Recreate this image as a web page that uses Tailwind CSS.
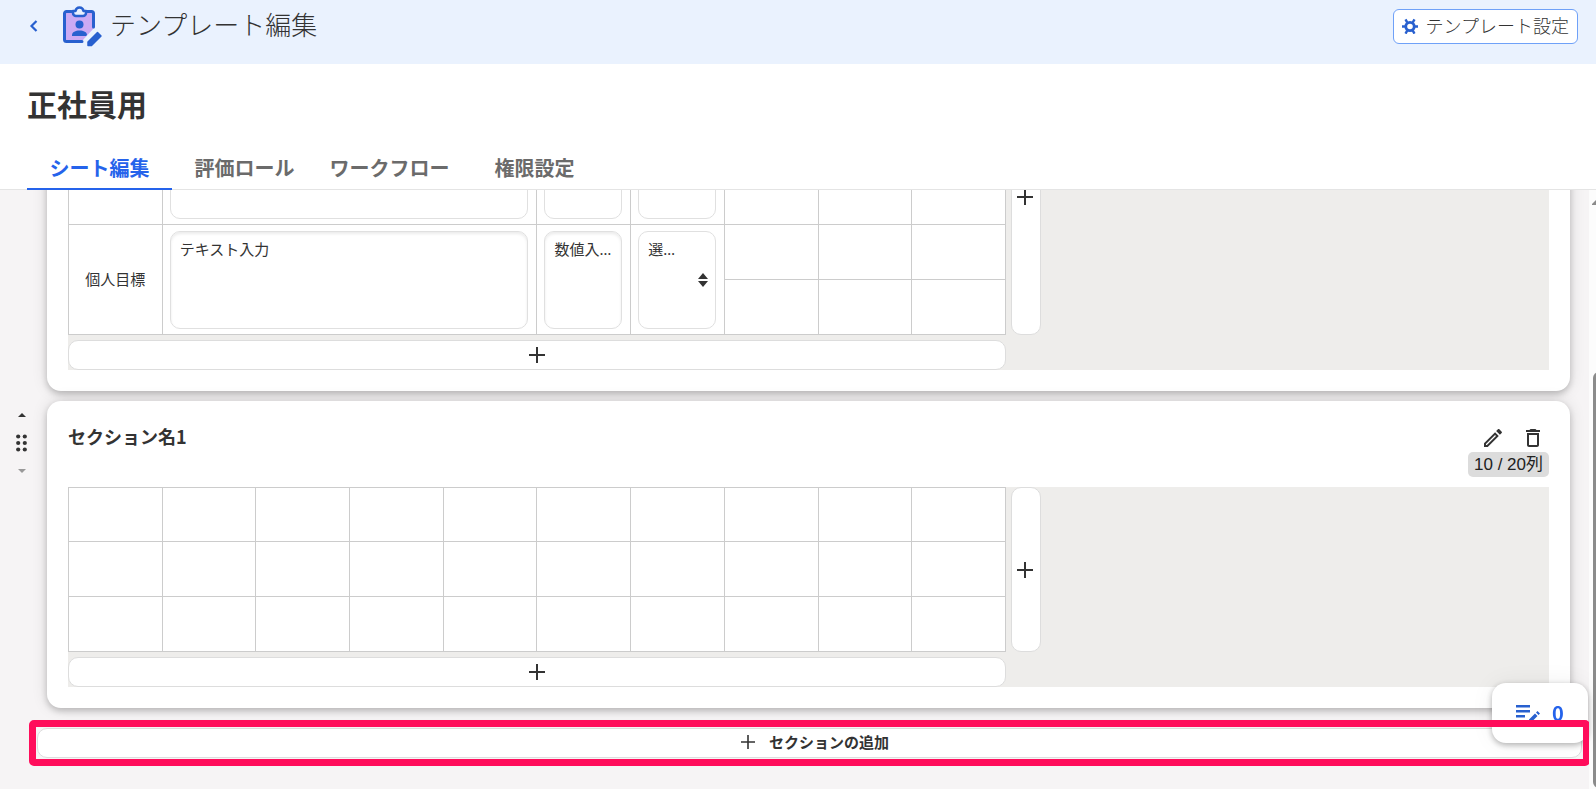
<!DOCTYPE html>
<html lang="ja">
<head>
<meta charset="UTF-8">
<meta name="viewport" content="width=device-width, initial-scale=1.0">
<title>テンプレート編集</title>
<script src="https://cdn.jsdelivr.net/npm/@tailwindcss/browser@4"></script>
</head>
<body class="flex h-screen flex-col overflow-hidden bg-[#f6f4f5] font-['Noto_Sans','Noto_Sans_CJK_JP',sans-serif] text-[#333]">

<header class="shrink-0 border-b border-[#e4e4e4] bg-white">
  <div class="flex h-16 items-start justify-between bg-[#eaf2fe] pr-[18px] pl-7">
    <div class="flex items-center pt-1">
      <a href="#" aria-label="戻る" class="flex h-11 w-[34px] items-center">
        <svg class="size-3" viewBox="0 0 12 12" fill="none" stroke="#2860cf" stroke-width="2.2"><path d="M8.500 1 3.500 6l5 5"/></svg>
      </a>
      <svg class="h-11 w-[42px]" viewBox="0 0 42 44" fill="none" stroke="#2860cf" stroke-width="3" stroke-linecap="round" stroke-linejoin="round">
        <path d="M3 7h29v17L20 37H3z" fill="#cbaaf4" stroke="none"/>
        <path d="M20 37.500H4.500a2 2 0 0 1-2-2V9.500a2 2 0 0 1 2-2h5M24.500 7.500h5a2 2 0 0 1 2 2V23"/>
        <path d="M11 7h2.500c.5-2.500 2-3.500 4-3.500s3.500 1 4 3.500H24v2a3 3 0 0 1-3 3h-7a3 3 0 0 1-3-3z" fill="#eaf2fe" stroke-width="2.500"/>
        <circle cx="17.500" cy="20.500" r="4" fill="#2860cf" stroke="none"/>
        <path d="M10 32v-1c0-3 3.500-4.500 7.500-4.500S25 28 25 31l-1 1z" fill="#2860cf" stroke="none"/>
        <path d="M27.500 40.500 37 31" stroke="#eaf2fe" stroke-width="10"/>
        <path d="M26 38 35.500 28.500l3.500 3.500-9.500 9.500H26z" fill="#2860cf" stroke-width="1.500"/>
      </svg>
      <h1 class="ml-[6px] pb-0.5 text-[26px] leading-10 font-light">テンプレート編集</h1>
    </div>
    <button type="button" class="mt-[9px] flex h-[35px] items-center gap-2 rounded-md border border-[#6fa1f8] bg-white px-2 pb-0.5 text-lg leading-6 font-light">
      <svg class="size-4" viewBox="0 0 16 16" fill="none" stroke="#2860cf">
        <circle cx="8" cy="8.500" r="4.200" stroke-width="2.800"/>
        <path d="M0 8.500h3M13 8.500h3M3.500 1.300l1.700 3M10.800 12.700l1.700 3M12.500 1.300l-1.700 3M5.200 12.700l-1.700 3" stroke-width="2.400"/>
      </svg>
      テンプレート設定
    </button>
  </div>
  <h2 class="px-[27px] pt-[19px] text-[30px] leading-[44px] font-bold">正社員用</h2>
  <nav class="mt-[18px] -mb-px flex px-[27px] text-center text-xl leading-6 font-bold text-[#6b6b6b]">
    <a href="#" class="h-[45px] w-[145px] border-b-2 border-[#2563eb] pt-3 text-[#2563eb]">シート編集</a>
    <a href="#" class="h-[45px] w-[145px] pt-3">評価ロール</a>
    <a href="#" class="h-[45px] w-[145px] pt-3">ワークフロー</a>
    <a href="#" class="h-[45px] w-[145px] pt-3">権限設定</a>
  </nav>
</header>

<div class="flex min-h-0 flex-1">
  <!-- anchored to the end: the list is scrolled down to its last section -->
  <main class="flex min-w-0 flex-1 flex-col justify-end overflow-hidden pb-[23px]">

    <section class="mr-[19px] mb-[10px] ml-[47px] shrink-0 rounded-[14px] bg-white p-[21px] shadow-[0_3px_6px_rgba(0,0,0,0.2),0_0_16px_rgba(0,0,0,0.12)]">
      <div class="grid grid-cols-[938px_30px] gap-[5px] bg-[#eeedeb]">
        <table class="w-full table-fixed border-collapse bg-white text-[15px] [&_td]:h-[55px] [&_td]:border [&_td]:border-[#ccc] [&_th]:border [&_th]:border-[#ccc]">
          <tbody>
            <tr><td></td><td colspan="4"></td><td></td><td></td><td></td><td></td><td></td></tr>
            <tr>
              <td rowspan="2"></td>
              <td rowspan="2" colspan="4" class="pr-2 pl-[7px]"><textarea aria-label="テキスト入力" class="block h-[98px] w-full resize-none rounded-[10px] border border-[#e0e0e0]"></textarea></td>
              <td rowspan="2" class="pr-2 pl-[7px]"><input aria-label="数値入力" class="block h-[98px] w-full rounded-[10px] border border-[#e0e0e0]"></td>
              <td rowspan="2" class="pr-2 pl-[7px]"><select aria-label="選択入力" class="block h-[98px] w-full appearance-none rounded-[10px] border border-[#e0e0e0]"><option></option></select></td>
              <td></td><td></td><td></td>
            </tr>
            <tr><td></td><td></td><td></td></tr>
            <tr>
              <th rowspan="2" class="font-normal">個人目標</th>
              <td rowspan="2" colspan="4" class="pr-2 pl-[7px]"><textarea aria-label="個人目標 テキスト入力" class="block h-[98px] w-full resize-none rounded-[10px] border border-[#e0e0e0] px-[9px] py-[6px] shadow-[inset_0_2px_3px_rgba(0,0,0,0.08)]">テキスト入力</textarea></td>
              <td rowspan="2" class="pr-2 pl-[7px]"><input aria-label="個人目標 数値入力" value="数値入力です" class="block h-[98px] w-full truncate rounded-[10px] border border-[#e0e0e0] pt-0.5 pr-1 pb-16 pl-[9px] shadow-[inset_0_2px_3px_rgba(0,0,0,0.08)]"></td>
              <td rowspan="2" class="pr-2 pl-[7px]">
                <div class="relative">
                  <select aria-label="個人目標 選択" class="block h-[98px] w-full appearance-none truncate rounded-[10px] border border-[#e0e0e0] pt-1 pr-[30px] pb-16 pl-[9px]"><option>選択入力</option></select>
                  <svg class="pointer-events-none absolute top-[42px] right-2 h-[14px] w-[10px]" viewBox="0 0 10 14" fill="#333"><path d="M5 0l5 6H0zM5 14l5-6H0z"/></svg>
                </div>
              </td>
              <td></td><td></td><td></td>
            </tr>
            <tr><td></td><td></td><td></td></tr>
          </tbody>
        </table>
        <button type="button" aria-label="列を追加" class="flex items-center justify-center rounded-[10px] border border-[#ddd] bg-white pr-0.5">
          <svg class="size-4" viewBox="0 0 16 16" stroke="#333" stroke-width="2"><path d="M8 0v16M0 8h16"/></svg>
        </button>
        <button type="button" aria-label="行を追加" class="flex h-[30px] items-center justify-center rounded-[10px] border border-[#ddd] bg-white">
          <svg class="size-4" viewBox="0 0 16 16" stroke="#333" stroke-width="2"><path d="M8 0v16M0 8h16"/></svg>
        </button>
      </div>
    </section>

    <div class="mb-3 flex shrink-0 items-start pr-[19px]">
      <div class="flex w-[47px] flex-col items-center gap-[17px] pt-3 pr-1">
        <button type="button" aria-label="上へ移動" class="flex h-1 w-2"><svg class="h-1 w-2" viewBox="0 0 8 4" fill="#333"><path d="M4 0l4 4H0z"/></svg></button>
        <button type="button" aria-label="並べ替え" class="flex">
          <svg class="h-[18px] w-[11px]" viewBox="0 0 11 18" fill="#333"><circle cx="2.200" cy="2.500" r="2.100"/><circle cx="8.800" cy="2.500" r="2.100"/><circle cx="2.200" cy="9" r="2.100"/><circle cx="8.800" cy="9" r="2.100"/><circle cx="2.200" cy="15.500" r="2.100"/><circle cx="8.800" cy="15.500" r="2.100"/></svg>
        </button>
        <button type="button" aria-label="下へ移動" disabled class="flex h-1 w-2"><svg class="h-1 w-2" viewBox="0 0 8 4" fill="#999"><path d="M0 0h8L4 4z"/></svg></button>
      </div>
      <section class="min-w-0 flex-1 rounded-[14px] bg-white p-[21px] shadow-[0_3px_6px_rgba(0,0,0,0.2),0_0_16px_rgba(0,0,0,0.12)]">
        <div class="mb-[10px] flex items-start justify-between">
          <h3 class="font-['Noto_Sans_CJK_JP',sans-serif] text-lg leading-7 font-bold">セクション名1</h3>
          <div class="flex flex-col items-end gap-px">
            <div class="flex h-[29px] items-end pr-1 pb-px">
              <button type="button" aria-label="編集" class="mr-4 flex">
                <svg class="size-6" viewBox="0 0 24 24" fill="#333"><path d="m14.060 9.020.920.920L5.920 19H5v-.920l9.060-9.060M17.660 3c-.250 0-.510.100-.700.290l-1.830 1.830 3.750 3.750 1.830-1.830c.390-.390.390-1.020 0-1.410l-2.340-2.340c-.200-.200-.450-.290-.710-.290zm-3.600 3.190L3 17.250V21h3.750L17.810 9.940l-3.750-3.750z"/></svg>
              </button>
              <button type="button" aria-label="削除" class="flex">
                <svg class="size-6" viewBox="0 0 24 24" fill="#333"><path d="M16 9v10H8V9h8m-1.500-6h-5l-1 1H5v2h14V4h-3.500l-1-1zM18 7H6v12c0 1.100.900 2 2 2h8c1.100 0 2-.900 2-2V7z"/></svg>
              </button>
            </div>
            <span class="h-[25px] rounded-[5px] bg-[#dcdcdc] px-[6px] font-['Liberation_Sans','Noto_Sans_CJK_JP',sans-serif] text-[17px] leading-[25px] text-[#222]">10 / 20列</span>
          </div>
        </div>
        <div class="grid grid-cols-[938px_30px] gap-[5px] bg-[#eeedeb]">
          <table class="w-full table-fixed border-collapse bg-white [&_td]:h-[55px] [&_td]:border [&_td]:border-[#ccc] [&_tr:first-child_td]:h-[54px]">
            <tbody>
              <tr><td></td><td></td><td></td><td></td><td></td><td></td><td></td><td></td><td></td><td></td></tr>
              <tr><td></td><td></td><td></td><td></td><td></td><td></td><td></td><td></td><td></td><td></td></tr>
              <tr><td></td><td></td><td></td><td></td><td></td><td></td><td></td><td></td><td></td><td></td></tr>
            </tbody>
          </table>
          <button type="button" aria-label="列を追加" class="flex items-center justify-center rounded-[10px] border border-[#ddd] bg-white pr-0.5">
            <svg class="size-4" viewBox="0 0 16 16" stroke="#333" stroke-width="2"><path d="M8 0v16M0 8h16"/></svg>
          </button>
          <button type="button" aria-label="行を追加" class="flex h-[30px] items-center justify-center rounded-[10px] border border-[#ddd] bg-white">
            <svg class="size-4" viewBox="0 0 16 16" stroke="#333" stroke-width="2"><path d="M8 0v16M0 8h16"/></svg>
          </button>
        </div>
      </section>
    </div>

    <div class="relative -mr-px ml-[29px] shrink-0 p-2">
      <button type="button" class="flex h-[30px] w-full items-center justify-center gap-[14px] rounded-[10px] border border-[#ddd] bg-white pb-0.5 pl-[11px] text-[15px] leading-5 font-bold">
        <svg class="size-[14px]" viewBox="0 0 14 14" stroke="#333" stroke-width="1.600"><path d="M7 0v14M0 7h14"/></svg>
        セクションの追加
      </button>
      <!-- highlight frame, drawn above the floating counter -->
      <div class="pointer-events-none absolute inset-0 z-20 rounded-[5px] border-[7px] border-[#ff0d5b]"></div>
    </div>
  </main>

  <div class="w-[7px] overflow-hidden bg-[#fcfcfc]" aria-hidden="true">
    <svg class="mt-2 ml-[3px] h-[7px] w-3" viewBox="0 0 12 7" fill="#8b8b8b"><path d="M5 1q1-1 2 0l5 5v1H0V6z"/></svg>
    <div class="mt-[167px] ml-1 h-[416px] w-3 rounded-md bg-[#8b8b8b]"></div>
  </div>
</div>

<!-- floating change counter -->
<button type="button" class="fixed right-2 bottom-[46px] z-10 flex h-[60px] w-24 items-center justify-center gap-3 rounded-[14px] bg-white font-['Noto_Sans_CJK_JP',sans-serif] text-xl font-bold text-[#2563eb] shadow-[0_2px_6px_rgba(0,0,0,0.3),0_0_24px_rgba(0,0,0,0.06)]">
  <svg class="h-5 w-6" viewBox="0 0 24 20" fill="#2860cf"><path d="M0 2h14v2.500H0zM0 7h14v2.500H0zM0 12h9v2.500H0zM13 19v-2.500l6-6 2.500 2.500-6 6zM20 9.500l1.500-1.500L24 10.500 22.500 12z"/></svg>
  0
</button>
</body>
</html>
